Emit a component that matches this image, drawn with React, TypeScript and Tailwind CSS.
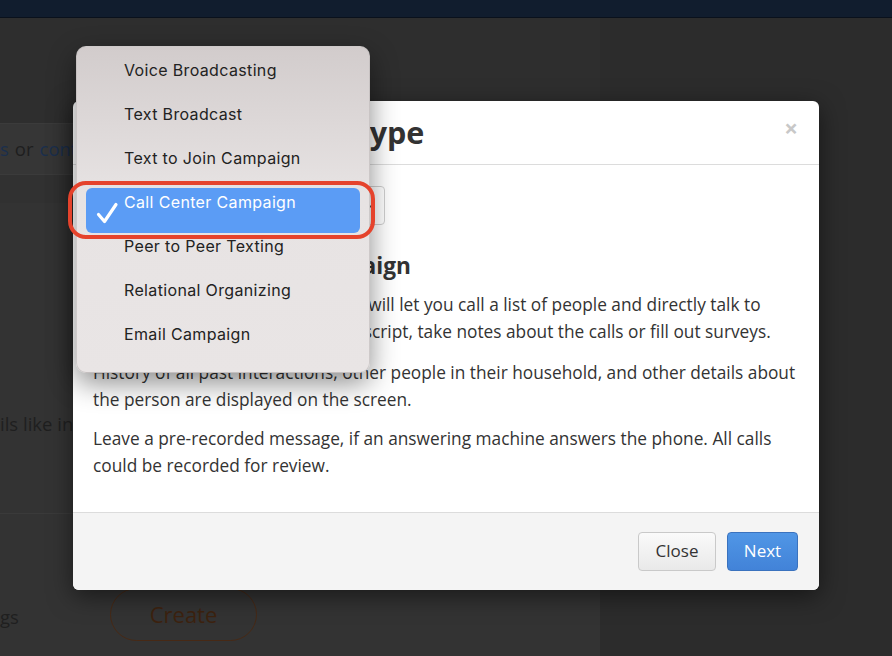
import React from "react";

const items = [
  "Voice Broadcasting",
  "Text Broadcast",
  "Text to Join Campaign",
  "Call Center Campaign",
  "Peer to Peer Texting",
  "Relational Organizing",
  "Email Campaign",
];

function PopupMenu() {
  return (
    <div className="absolute left-[76px] top-[46px] w-[294px] h-[327px] rounded-[10px] border border-[#bdb8b8]/60 bg-linear-to-b from-[#d2cccc] via-[#e7e3e3] via-45% to-[#e9e5e5] pt-[1px] shadow-[0_10px_28px_rgba(0,0,0,0.45)] font-['Inter','Liberation_Sans',sans-serif] text-[16px] tracking-[0.35px] text-[#222]">
      {items.map((label) =>
        label === "Call Center Campaign" ? (
          <div key={label} className="relative h-[44px] flex items-center pl-[47px]">
            <div className="absolute left-[9px] right-[9px] top-[8px] h-[45px] rounded-[6px] bg-[#5b9cf5]" />
            <svg className="absolute left-[19px] top-[22px] w-[24px] h-[24px]" viewBox="0 0 24 24" fill="none">
              <path d="M2.5 12.5 L8.5 19.5 L20 2.5" stroke="white" strokeWidth="3.2" strokeLinecap="round" strokeLinejoin="round" />
            </svg>
            <span className="relative text-white">{label}</span>
          </div>
        ) : (
          <div key={label} className="h-[44px] flex items-center pl-[47px]">
            {label}
          </div>
        )
      )}
    </div>
  );
}

function Modal() {
  return (
    <div className="absolute left-[73px] top-[101px] w-[746px] h-[489px] rounded-[6px] bg-white shadow-[0_6px_24px_rgba(0,0,0,0.5)] flex flex-col overflow-hidden text-[#333]">
      <div className="h-[64px] shrink-0 border-b border-[#dcdcdc] pl-[20px] pr-[21px] flex items-center justify-between">
        <h2 className="text-[30.5px] font-bold">Select Campaign Type</h2>
        <span className="text-[24px] font-bold text-[#c8c8c8] leading-none -mt-[10px]">×</span>
      </div>
      <div className="flex-1 pl-[20px] pt-[21px]">
        <div className="w-[292px] h-[39px] rounded-[4px] border border-[#cfcfcf] flex items-center justify-between pl-[12px] pr-[10px] text-[16px]">
          <span>Call Center Campaign</span>
          <svg className="w-[10px] h-[10px]" viewBox="0 0 10 10" fill="none">
            <path d="M1 3 L5 7 L9 3" stroke="#555" strokeWidth="1.4" />
          </svg>
        </div>
        <h3 className="mt-[26px] text-[22.7px] font-bold leading-[30px]">About Call Center Campaign</h3>
        <div className="text-[17.3px] leading-[27px] w-[710px]">
          <p className="mt-[10px]">
            The Call Center Campaign feature will let you call a list of people and directly talk to them over the phone. So follow a script, take notes about the calls or fill out surveys.
          </p>
          <p className="mt-[14px]">
            History of all past interactions, other people in their household, and other details about the person are displayed on the screen.
          </p>
          <p className="mt-[12px]">
            Leave a pre-recorded message, if an answering machine answers the phone. All calls could be recorded for review.
          </p>
        </div>
      </div>
      <div className="h-[78px] shrink-0 border-t border-[#dcdcdc] bg-[#f4f4f4] flex items-center justify-end gap-[11px] pr-[21px] pb-[1px]">
        <button className="w-[78px] h-[39px] rounded-[4px] border border-[#c9c9c9] bg-linear-to-b from-[#fafafa] to-[#e9e9e9] text-[17px] text-[#333]">
          Close
        </button>
        <button className="w-[71px] h-[39px] rounded-[4px] border border-[#3a72be] bg-linear-to-b from-[#5096e6] to-[#4283d8] text-[17px] text-white">
          Next
        </button>
      </div>
    </div>
  );
}

export default function App() {
  return (
    <div className="relative w-[892px] h-[656px] overflow-hidden bg-[#2c2c2c] font-['Open_Sans','Liberation_Sans',sans-serif]">
      <div className="h-[18px] bg-[#111d2e] border-b border-[#0a111c]" />
      <div className="flex h-[638px]">
        <div className="w-[600px] flex flex-col bg-[#333333]">
          <div className="h-[105px] bg-[#2e2e2e]" />
          <div className="h-[52px] bg-[#363636] border-y border-[#3b3b3b] flex items-center text-[18.5px] whitespace-nowrap">
            <span className="text-[#1b2f4d]">s</span>
            <span className="text-[#1e1e1e] mx-[6px]">or</span>
            <span className="text-[#1b2f4d]">contact lists</span>
          </div>
          <div className="h-[28px] bg-[#313131]" />
          <div className="h-[310px] pt-[207px] text-[18.5px] text-[#1f1f1f] whitespace-nowrap">ils like in the details</div>
          <div className="flex-1 border-t border-[#3a3a3a] flex items-start pt-[74px]">
            <span className="w-[110px] text-[18.5px] text-[#1f1f1f] mt-[15px]">gs</span>
            <div className="w-[147px] h-[53px] rounded-full border border-[#472915] flex items-center justify-center text-[22px] text-[#3d220f]">
              Create
            </div>
          </div>
        </div>
        <div className="flex-1" />
      </div>

      <Modal />
      <PopupMenu />
      <div className="absolute left-[68px] top-[181px] w-[307px] h-[58px] rounded-[18px] border-[4px] border-[#e5432c]" />
    </div>
  );
}
